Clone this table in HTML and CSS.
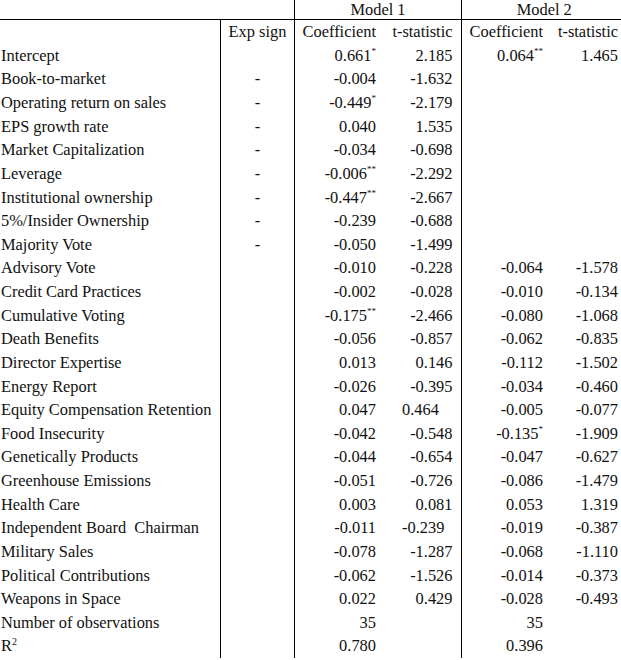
FILE: index.html
```html
<!DOCTYPE html>
<html lang="en">
<head>
    <meta charset="UTF-8">
    <title>Regression results</title>
    <link rel="stylesheet" href="styles.css">
</head>
<body>
    <table class="results">
        <colgroup>
            <col class="c-label">
            <col class="c-sign">
            <col class="c-coef1">
            <col class="c-t1">
            <col class="c-coef2">
            <col class="c-t2">
        </colgroup>
        <tr class="top">
            <td colspan="2"></td>
            <td colspan="2" class="model">Model 1</td>
            <td colspan="2" class="model">Model 2</td>
        </tr>
        <tr class="head">
            <td></td>
            <td class="sign">Exp sign</td>
            <td class="num sep">Coefficient</td>
            <td class="num">t-statistic</td>
            <td class="num sep">Coefficient</td>
            <td class="num">t-statistic</td>
        </tr>
        <tr><td>Intercept</td><td class="sign"></td><td class="num sep">0.661<sup>*</sup></td><td class="num">2.185</td><td class="num sep">0.064<sup>**</sup></td><td class="num">1.465</td></tr>
        <tr><td>Book-to-market</td><td class="sign">-</td><td class="num sep">-0.004</td><td class="num">-1.632</td><td class="num sep"></td><td class="num"></td></tr>
        <tr><td>Operating return on sales</td><td class="sign">-</td><td class="num sep">-0.449<sup>*</sup></td><td class="num">-2.179</td><td class="num sep"></td><td class="num"></td></tr>
        <tr><td>EPS growth rate</td><td class="sign">-</td><td class="num sep">0.040</td><td class="num">1.535</td><td class="num sep"></td><td class="num"></td></tr>
        <tr><td>Market Capitalization</td><td class="sign">-</td><td class="num sep">-0.034</td><td class="num">-0.698</td><td class="num sep"></td><td class="num"></td></tr>
        <tr><td>Leverage</td><td class="sign">-</td><td class="num sep">-0.006<sup>**</sup></td><td class="num">-2.292</td><td class="num sep"></td><td class="num"></td></tr>
        <tr><td>Institutional ownership</td><td class="sign">-</td><td class="num sep">-0.447<sup>**</sup></td><td class="num">-2.667</td><td class="num sep"></td><td class="num"></td></tr>
        <tr><td>5%/Insider Ownership</td><td class="sign">-</td><td class="num sep">-0.239</td><td class="num">-0.688</td><td class="num sep"></td><td class="num"></td></tr>
        <tr><td>Majority Vote</td><td class="sign">-</td><td class="num sep">-0.050</td><td class="num">-1.499</td><td class="num sep"></td><td class="num"></td></tr>
        <tr><td>Advisory Vote</td><td class="sign"></td><td class="num sep">-0.010</td><td class="num">-0.228</td><td class="num sep">-0.064</td><td class="num">-1.578</td></tr>
        <tr><td>Credit Card Practices</td><td class="sign"></td><td class="num sep">-0.002</td><td class="num">-0.028</td><td class="num sep">-0.010</td><td class="num">-0.134</td></tr>
        <tr><td>Cumulative Voting</td><td class="sign"></td><td class="num sep">-0.175<sup>**</sup></td><td class="num">-2.466</td><td class="num sep">-0.080</td><td class="num">-1.068</td></tr>
        <tr><td>Death Benefits</td><td class="sign"></td><td class="num sep">-0.056</td><td class="num">-0.857</td><td class="num sep">-0.062</td><td class="num">-0.835</td></tr>
        <tr><td>Director Expertise</td><td class="sign"></td><td class="num sep">0.013</td><td class="num">0.146</td><td class="num sep">-0.112</td><td class="num">-1.502</td></tr>
        <tr><td>Energy Report</td><td class="sign"></td><td class="num sep">-0.026</td><td class="num">-0.395</td><td class="num sep">-0.034</td><td class="num">-0.460</td></tr>
        <tr><td>Equity Compensation Retention</td><td class="sign"></td><td class="num sep">0.047</td><td class="num odd">0.464</td><td class="num sep">-0.005</td><td class="num">-0.077</td></tr>
        <tr><td>Food Insecurity</td><td class="sign"></td><td class="num sep">-0.042</td><td class="num">-0.548</td><td class="num sep">-0.135<sup>*</sup></td><td class="num">-1.909</td></tr>
        <tr><td>Genetically Products</td><td class="sign"></td><td class="num sep">-0.044</td><td class="num">-0.654</td><td class="num sep">-0.047</td><td class="num">-0.627</td></tr>
        <tr><td>Greenhouse Emissions</td><td class="sign"></td><td class="num sep">-0.051</td><td class="num">-0.726</td><td class="num sep">-0.086</td><td class="num">-1.479</td></tr>
        <tr><td>Health Care</td><td class="sign"></td><td class="num sep">0.003</td><td class="num">0.081</td><td class="num sep">0.053</td><td class="num">1.319</td></tr>
        <tr><td>Independent Board &nbsp;Chairman</td><td class="sign"></td><td class="num sep">-0.011</td><td class="num odd">-0.239</td><td class="num sep">-0.019</td><td class="num">-0.387</td></tr>
        <tr><td>Military Sales</td><td class="sign"></td><td class="num sep">-0.078</td><td class="num">-1.287</td><td class="num sep">-0.068</td><td class="num">-1.110</td></tr>
        <tr><td>Political Contributions</td><td class="sign"></td><td class="num sep">-0.062</td><td class="num">-1.526</td><td class="num sep">-0.014</td><td class="num">-0.373</td></tr>
        <tr><td>Weapons in Space</td><td class="sign"></td><td class="num sep">0.022</td><td class="num">0.429</td><td class="num sep">-0.028</td><td class="num">-0.493</td></tr>
        <tr><td>Number of observations</td><td class="sign"></td><td class="num sep">35</td><td class="num"></td><td class="num sep">35</td><td class="num"></td></tr>
        <tr><td>R<sup class="sq">2</sup></td><td class="sign"></td><td class="num sep">0.780</td><td class="num"></td><td class="num sep">0.396</td><td class="num"></td></tr>
    </table>
</body>
</html>
```

FILE: styles.css
```css
html, body { margin: 0; padding: 0; background: #fff; overflow: hidden; }
body { font-family: "Liberation Serif", "Times New Roman", serif; font-size: 16.4px; color: #111; }
.results { border-collapse: collapse; table-layout: fixed; width: 626px; }
.c-label { width: 220px; }
.c-sign { width: 74px; }
.c-coef1 { width: 90px; }
.c-t1 { width: 77px; }
.c-coef2 { width: 90px; }
.c-t2 { width: 75px; }
.results td { padding: 0 0 0 1px; height: 23.64px; line-height: 18px; white-space: nowrap; vertical-align: middle; }
.results tr.top td { height: 19px; line-height: 17px; border-bottom: 1px solid #000; text-align: center; }
.results tr.top td.model { border-left: 1px solid #000; }
.results tr.head td { height: 24px; }
.sign { text-align: center; border-left: 1px solid #000; }
.num { text-align: right; padding-right: 8px !important; }
.num.sep { border-left: 1px solid #000; }
.num.odd { text-align: left; padding-left: 18px !important; }
sup { font-size: 9px; line-height: 0; vertical-align: 7px; }
sup.sq { font-size: 10px; vertical-align: 6px; }
```
